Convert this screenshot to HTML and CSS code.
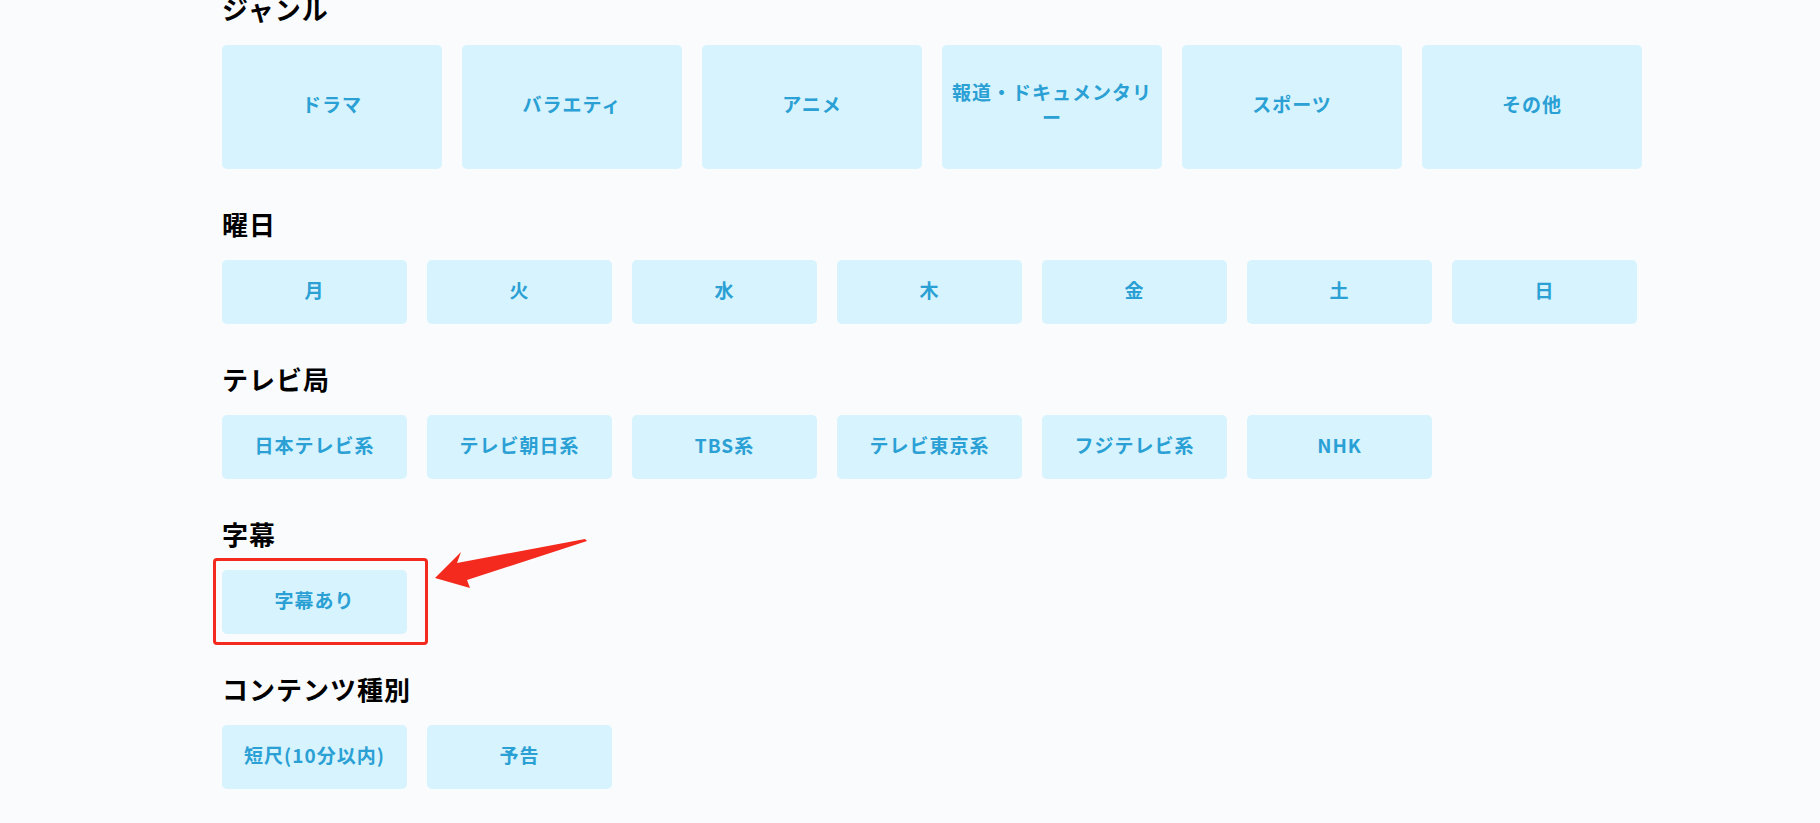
FILE: index.html
```html
<!DOCTYPE html>
<html lang="ja">
<head>
<meta charset="utf-8">
<title>検索条件</title>
<link rel="stylesheet" href="styles.css">
</head>
<body>
<main class="page">
  <section class="filter">
    <h2 class="filter-title">ジャンル</h2>
    <div class="tiles tiles-6">
      <button class="tile tile-tall">ドラマ</button>
      <button class="tile tile-tall">バラエティ</button>
      <button class="tile tile-tall">アニメ</button>
      <button class="tile tile-tall">報道・ドキュメンタリー</button>
      <button class="tile tile-tall">スポーツ</button>
      <button class="tile tile-tall">その他</button>
    </div>
  </section>

  <section class="filter">
    <h2 class="filter-title">曜日</h2>
    <div class="tiles tiles-7">
      <button class="tile">月</button>
      <button class="tile">火</button>
      <button class="tile">水</button>
      <button class="tile">木</button>
      <button class="tile">金</button>
      <button class="tile">土</button>
      <button class="tile">日</button>
    </div>
  </section>

  <section class="filter">
    <h2 class="filter-title">テレビ局</h2>
    <div class="tiles tiles-7">
      <button class="tile">日本テレビ系</button>
      <button class="tile">テレビ朝日系</button>
      <button class="tile">TBS系</button>
      <button class="tile">テレビ東京系</button>
      <button class="tile">フジテレビ系</button>
      <button class="tile">NHK</button>
    </div>
  </section>

  <section class="filter">
    <h2 class="filter-title">字幕</h2>
    <div class="tiles tiles-7 annotated">
      <button class="tile">字幕あり</button>
      <span class="highlight-box"></span>
      <svg class="highlight-arrow" width="154" height="51" viewBox="0 0 154 51" aria-hidden="true">
        <polygon points="1,40 27,14 23,25 151,1 153,3 33,42 36,50" fill="#f32a1d"/>
      </svg>
    </div>
  </section>

  <section class="filter">
    <h2 class="filter-title">コンテンツ種別</h2>
    <div class="tiles tiles-7">
      <button class="tile">短尺(10分以内)</button>
      <button class="tile">予告</button>
    </div>
  </section>
</main>
</body>
</html>
```

FILE: styles.css
```css
html, body {
  margin: 0;
  padding: 0;
  background: #f9fbfd;
}

body {
  font-family: "Noto Sans CJK JP", "Noto Sans", sans-serif;
  color: #000;
  overflow: hidden;
}

.page {
  padding-left: 222px;
  margin-top: -6px;
}

.filter + .filter {
  margin-top: 40px;
}

.filter-title {
  margin: 0 0 21px;
  font-size: 26px;
  line-height: 30px;
  font-weight: 700;
  letter-spacing: 1px;
  color: #000;
}

.tiles {
  display: grid;
  column-gap: 20px;
}

.tiles-6 {
  grid-template-columns: repeat(6, 220px);
}

.tiles-7 {
  grid-template-columns: repeat(7, 185px);
}

.tile {
  display: flex;
  align-items: center;
  justify-content: center;
  height: 64px;
  margin: 0;
  padding: 0 8px 6px;
  border: none;
  border-radius: 5px;
  background: #d6f3fe;
  color: #2aa0d4;
  font-family: "Noto Sans CJK JP", "Noto Sans", sans-serif;
  font-size: 19px;
  font-weight: 700;
  letter-spacing: 1px;
  line-height: 25px;
  text-align: center;
  line-break: loose;
  cursor: pointer;
}

.tile-tall {
  height: 124px;
  padding-bottom: 7px;
}

.annotated {
  position: relative;
}

.highlight-box {
  position: absolute;
  left: -9px;
  top: -12px;
  width: 209px;
  height: 81px;
  border: 3px solid #f32a1d;
  border-radius: 4px;
}

.highlight-arrow {
  position: absolute;
  left: 212px;
  top: -32px;
}
```
